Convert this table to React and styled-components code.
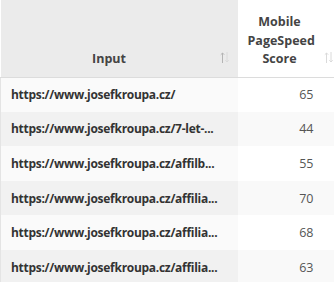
import React from 'react';
import styled, { createGlobalStyle } from 'styled-components';

const GlobalStyle = createGlobalStyle`
	html, body {
		margin: 0;
		padding: 0;
		background: #fff;
		font-family: 'Open Sans', 'Liberation Sans', sans-serif;
	}
`;

const rows = [
	{ url: 'https://www.josefkroupa.cz/', score: 65 },
	{ url: 'https://www.josefkroupa.cz/7-let-...', score: 44 },
	{ url: 'https://www.josefkroupa.cz/affilb...', score: 55 },
	{ url: 'https://www.josefkroupa.cz/affilia...', score: 70 },
	{ url: 'https://www.josefkroupa.cz/affilia...', score: 68 },
	{ url: 'https://www.josefkroupa.cz/affilia...', score: 63 },
];

function SortIcon({ active, right }) {
	return (
		<Sort right={right} width="10" height="11" viewBox="0 0 10 11">
			<path d="M2.5 11V1M0.8 2.7L2.5 1L4.2 2.7" fill="none" stroke={active ? '#b4b4b4' : '#dadada'} strokeWidth="1" />
			<path d="M7 0V10M5.3 8.3L7 10L8.7 8.3" fill="none" stroke="#dadada" strokeWidth="1" />
		</Sort>
	);
}

function App() {
	return (
		<>
			<GlobalStyle />
			<Table>
				<colgroup>
					<col style={{ width: 237 }} />
					<col style={{ width: 97 }} />
				</colgroup>
				<thead>
					<tr>
						<Head sorted padRight={30}>
							Input
							<SortIcon active right={8} />
						</Head>
						<Head padRight={23}>
							Mobile PageSpeed Score
							<SortIcon right={1} />
						</Head>
					</tr>
				</thead>
				<tbody>
					{rows.map((r, i) => (
						<Row key={i} odd={i % 2 === 1}>
							<UrlCell>{r.url}</UrlCell>
							<ScoreCell>{r.score}</ScoreCell>
						</Row>
					))}
				</tbody>
			</Table>
		</>
	);
}

export default App;

const Table = styled.table`
	width: 334px;
	border-collapse: collapse;
	table-layout: fixed;
`;

const Head = styled.th`
	position: relative;
	height: 77px;
	box-sizing: border-box;
	padding: 0 ${(p) => p.padRight}px 8px 10px;
	vertical-align: bottom;
	text-align: center;
	font-size: 12.5px;
	font-weight: 700;
	line-height: 18.5px;
	color: #444;
	background: ${(p) => (p.sorted ? '#ebebeb' : '#fff')};
	border-bottom: 1px solid #dcdcdc;
`;

const Sort = styled.svg`
	position: absolute;
	right: ${(p) => p.right}px;
	bottom: 14px;
`;

const Row = styled.tr`
	height: 34.6px;
	background: ${(p) => (p.odd ? '#f9f9f9' : '#fff')};
	td:first-child {
		background: ${(p) => (p.odd ? '#f1f1f1' : '#fafafa')};
	}
`;

const UrlCell = styled.td`
	padding: 0 0 0 10px;
	font-size: 12px;
	font-weight: 700;
	letter-spacing: -0.28px;
	color: #333;
	white-space: nowrap;
	overflow: hidden;
	border-left: 1px solid #e4e4e4;
`;

const ScoreCell = styled.td`
	padding: 0 21px 0 0;
	text-align: right;
	font-size: 12.5px;
	color: #555;
`;
